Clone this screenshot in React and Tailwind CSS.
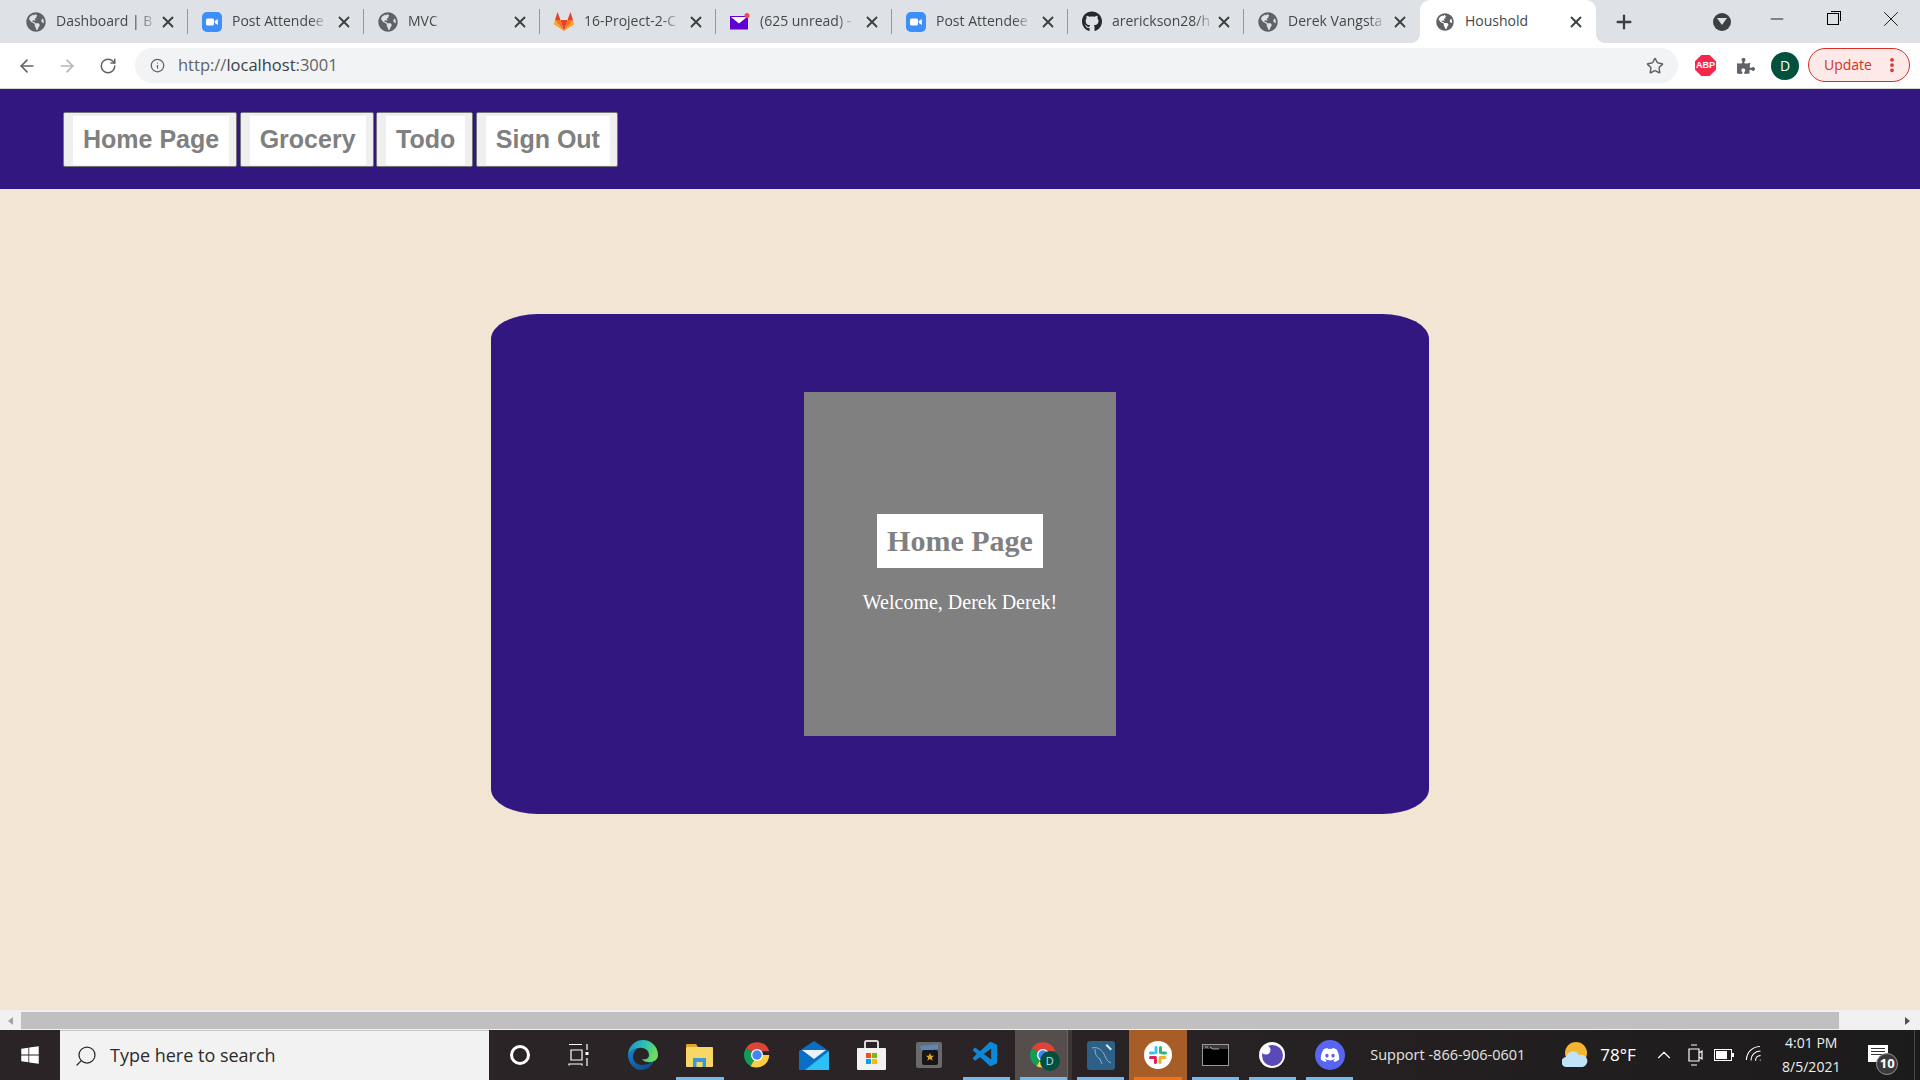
import React from "react";
import { ArrowLeft, ArrowRight, RotateCw, Info, Star, Plus, X, Minus, Search, ChevronUp, Wifi, MoreVertical } from "lucide-react";
import { FaGlobeAmericas, FaGithub, FaWindows, FaDiscord, FaPuzzlePiece } from "react-icons/fa";
import { VscVscode } from "react-icons/vsc";

const ZoomIcon = () => (
  <svg width="20" height="20" viewBox="0 0 20 20">
    <rect width="20" height="20" rx="5" fill="#3d8ef8" />
    <rect x="4" y="6.5" width="8" height="7" rx="1.5" fill="#fff" />
    <path d="M12.8 9l3-2v6l-3-2z" fill="#fff" />
  </svg>
);

const GitlabIcon = () => (
  <svg width="20" height="19" viewBox="0 0 20 19">
    <path d="M3.5 0L6.5 8H1z" fill="#e24329" />
    <path d="M16.5 0L13.5 8H19z" fill="#e24329" />
    <path d="M6.5 8h7L10 19z" fill="#e24329" />
    <path d="M1 8h5.5L10 19z" fill="#fc6d26" />
    <path d="M19 8h-5.5L10 19z" fill="#fc6d26" />
    <path d="M1 8L0 11.5q0 1 1 1.5l9 6z" fill="#fca326" />
    <path d="M19 8l1 3.5q0 1-1 1.5l-9 6z" fill="#fca326" />
  </svg>
);

const MailIcon = () => (
  <svg width="20" height="20" viewBox="0 0 20 20">
    <rect x="0" y="4" width="18" height="13.5" fill="#6001d2" />
    <path d="M1 5h16l-8 6.5z" fill="#fff" />
    <circle cx="17" cy="3.5" r="2.5" fill="#f44" />
  </svg>
);

const ChromeIcon = ({ size = 28 }) => (
  <svg width={size} height={size} viewBox="0 0 26 26">
    <path d="M13 13L2.6 7A12 12 0 0 1 24.4 9.5H13z" fill="#db4437" />
    <path d="M13 13l-6 10.4A12 12 0 0 1 2.6 7z" fill="#0f9d58" />
    <path d="M13 13h11.4A12 12 0 0 1 7 23.4z" fill="#ffcd40" />
    <circle cx="13" cy="13" r="5.6" fill="#fff" />
    <circle cx="13" cy="13" r="4.4" fill="#4285f4" />
  </svg>
);

const EdgeIcon = () => (
  <svg width="30" height="30" viewBox="0 0 30 30">
    <defs>
      <linearGradient id="edgeTop" x1="0" y1="0" x2="1" y2="0.3">
        <stop offset="0" stopColor="#1b8ed6" />
        <stop offset="0.6" stopColor="#2cc4b0" />
        <stop offset="1" stopColor="#6ddc5c" />
      </linearGradient>
      <linearGradient id="edgeLow" x1="0" y1="0" x2="0.6" y2="1">
        <stop offset="0" stopColor="#1d82cc" />
        <stop offset="1" stopColor="#0c4f96" />
      </linearGradient>
    </defs>
    <path d="M15 0a15 15 0 0 1 15 15c0 5-5 8-10 7-3 0-5-1-6-3 3 1 7 0 7-4 0-5-5-8-10-7C5 9 1 12 0 15A15 15 0 0 1 15 0z" fill="url(#edgeTop)" />
    <path d="M0 15c1-3 5-6 9-6-3 2-4 5-4 8 0 5 5 8 9 8 5 0 9-2 12-4-2 5-7 9-13 9C6 30 0 23 0 15z" fill="url(#edgeLow)" />
  </svg>
);

const FolderIcon = () => (
  <svg width="27" height="23" viewBox="0 0 27 23">
    <path d="M0 1q0-1 1-1h9l2 3H0z" fill="#e0a526" />
    <rect y="3" width="27" height="20" rx="1" fill="#f7d766" />
    <path d="M7 23v-9h13v9h-3.5v-5h-6v5z" fill="#3a9ad9" />
  </svg>
);

const MailAppIcon = () => (
  <svg width="30" height="29" viewBox="0 0 30 29">
    <path d="M15 0l15 10v19H0V10z" fill="#0a6fc4" />
    <path d="M3 9h24L15 18z" fill="#e8f2f8" />
    <path d="M30 10v19H6z" fill="#2cc0f5" />
  </svg>
);

const StoreIcon = () => (
  <svg width="29" height="30" viewBox="0 0 29 30">
    <path d="M8 8V2.5q0-1.5 1.5-1.5h10q1.5 0 1.5 1.5V8" fill="none" stroke="#d8d8d8" strokeWidth="2" />
    <rect y="8" width="29" height="22" rx="1" fill="#f2f2f2" />
    <rect x="9" y="13" width="5" height="5" fill="#f25022" />
    <rect x="15" y="13" width="5" height="5" fill="#7fba00" />
    <rect x="9" y="19" width="5" height="5" fill="#00a4ef" />
    <rect x="15" y="19" width="5" height="5" fill="#ffb900" />
  </svg>
);

const GameIcon = () => (
  <svg width="26" height="26" viewBox="0 0 26 26">
    <rect width="26" height="26" rx="2" fill="#6a6a6a" />
    <path d="M4 4l18-2v5L6 9z" fill="#5a86b8" />
    <rect x="6" y="8" width="16" height="15" rx="2" fill="#161616" />
    <path d="M14 11l1.2 2.8h2.8l-2.2 1.9.9 3-2.7-1.8-2.7 1.8.9-3-2.2-1.9h2.8z" fill="#e0a526" />
  </svg>
);

const MysqlIcon = () => (
  <svg width="28" height="29" viewBox="0 0 28 29">
    <rect width="28" height="29" rx="3" fill="#2c6087" />
    <path d="M5 7c6-2 11 3 13 8 1 3 3 6 6 7M8 8c0 6 2 8 5 10l2 5" fill="none" stroke="#a9c3d6" strokeWidth="0.8" />
    <path d="M20 3l5 5-1.5 1.5-5-5z" fill="#d8e4ec" />
  </svg>
);

const SlackIcon = () => (
  <svg width="28" height="28" viewBox="0 0 28 28">
    <circle cx="14" cy="14" r="14" fill="#fff" />
    <rect x="10.5" y="5" width="3" height="8" rx="1.5" fill="#36c5f0" />
    <rect x="5" y="10.5" width="6" height="3" rx="1.5" fill="#36c5f0" />
    <rect x="15" y="5" width="3" height="8" rx="1.5" fill="#2eb67d" />
    <rect x="17" y="10.5" width="6" height="3" rx="1.5" fill="#2eb67d" />
    <rect x="14.5" y="15" width="8" height="3" rx="1.5" fill="#ecb22e" />
    <rect x="14.5" y="17" width="3" height="6" rx="1.5" fill="#ecb22e" />
    <rect x="5" y="15" width="8" height="3" rx="1.5" fill="#e01e5a" />
    <rect x="10" y="17" width="3" height="6" rx="1.5" fill="#e01e5a" />
  </svg>
);

const TerminalIcon = () => (
  <svg width="27" height="22" viewBox="0 0 27 22">
    <rect width="27" height="22" fill="#9a9a9a" />
    <rect x="1" y="1" width="25" height="4" fill="#3a3a3a" />
    <rect x="1" y="5" width="25" height="16" fill="#000" />
    <path d="M3 3h3M8 3l3 2h6" stroke="#ccc" strokeWidth="0.8" fill="none" />
  </svg>
);

const EclipseIcon = () => (
  <svg width="26" height="26" viewBox="0 0 26 26">
    <circle cx="13" cy="13" r="13" fill="#fff" />
    <circle cx="13.5" cy="13.5" r="10.5" fill="#5b49b8" />
    <circle cx="7" cy="8" r="4.5" fill="#fff" />
  </svg>
);

const WeatherIcon = () => (
  <svg width="26" height="26" viewBox="0 0 26 26">
    <circle cx="14" cy="11" r="11" fill="#f5b52e" />
    <path d="M5 25a5 5 0 0 1-1-10 7 7 0 0 1 13-2 6 6 0 0 1 4 12z" fill="#bfe3f7" />
  </svg>
);

const globe = <FaGlobeAmericas size={20} className="text-[#5f6368]" />;

const tabs = [
  { title: "Dashboard | B", icon: globe },
  { title: "Post Attendee", icon: <ZoomIcon /> },
  { title: "MVC", icon: globe },
  { title: "16-Project-2-C", icon: <GitlabIcon /> },
  { title: "(625 unread) -", icon: <MailIcon /> },
  { title: "Post Attendee", icon: <ZoomIcon /> },
  { title: "arerickson28/h", icon: <FaGithub size={21} className="text-[#24292e]" /> },
  { title: "Derek Vangsta", icon: globe },
];

function Tab({ title, icon, last }) {
  return (
    <div className="w-[176px] h-[43px] flex items-center pl-[14px] pr-[11px] shrink-0 relative">
      <span className="w-5 flex justify-center shrink-0">{icon}</span>
      <span className="ml-[10px] -mt-[2px] whitespace-nowrap text-[14px] text-[#45474a] [mask-image:linear-gradient(to_right,black_85%,rgba(0,0,0,0.25))]">{title}</span>
      <X size={18} strokeWidth={2.5} className="ml-auto text-[#3c4043]" />
      {!last && <span className="absolute right-0 top-[9px] h-[25px] w-px bg-[#94979b]" />}
    </div>
  );
}

function NavButton({ label }) {
  return (
    <button className="h-[55px] bg-[#efefef] border border-[#767676] rounded-[2px] pl-[9px] pr-[7px] flex items-start pt-[3px]">
      <span className="h-[49px] bg-white px-[10px] flex items-center text-[25px] font-bold text-[#808080] font-['Liberation_Sans',Arial,sans-serif]">{label}</span>
    </button>
  );
}

function TaskItem({ children, active, lit, accent, hot }) {
  return (
    <div className={`w-[57.25px] h-[50px] flex items-center justify-center shrink-0 relative ${hot ? "bg-[#a65d27]" : active ? "bg-[#564e4d]" : ""}`}>
      {children}
      {active && <span className="absolute top-0 bottom-0 right-0 w-[5px] bg-[#3d3636] border-l border-[#6a6362]" />}
      {lit && <span className={`absolute bottom-0 left-[5px] right-[5px] h-[3px] ${accent ? "bg-[#f7720f]" : "bg-[#76b9ed]"}`} />}
    </div>
  );
}

export default function App() {
  return (
    <div className="w-[1920px] h-[1080px] flex flex-col overflow-hidden bg-[#f3e5d3] font-['Open_Sans','Liberation_Sans',sans-serif]">
      {/* browser tabs */}
      <div className="h-[43px] bg-[#dee1e6] flex items-center pl-[12px] shrink-0">
        {tabs.map((t, i) => (
          <Tab key={i} {...t} last={i === tabs.length - 1} />
        ))}
        <div className="w-[176px] h-[43px] bg-white rounded-t-[10px] flex items-center pl-[16px] pr-[11px] shrink-0 relative">
          <span className="absolute -left-[10px] bottom-0 w-[10px] h-[10px] bg-[radial-gradient(circle_at_0_0,#dee1e6_10px,#ffffff_10.5px)]" />
          <span className="absolute -right-[10px] bottom-0 w-[10px] h-[10px] bg-[radial-gradient(circle_at_100%_0,#dee1e6_10px,#ffffff_10.5px)]" />
          <FaGlobeAmericas size={18} className="text-[#5f6368]" />
          <span className="ml-[11px] -mt-[2px] text-[14px] text-[#45474a]">Houshold</span>
          <X size={18} strokeWidth={2.5} className="ml-auto text-[#3c4043]" />
        </div>
        <Plus size={22} strokeWidth={2.5} className="ml-[17px] text-[#3c4043]" />
        <div className="ml-[78px] w-[18px] h-[18px] rounded-full bg-[#3c4043] flex items-center justify-center">
          <span className="w-0 h-0 border-x-[5px] border-x-transparent border-t-[7px] border-t-[#dee1e6]" />
        </div>
        <Minus size={20} strokeWidth={1} className="ml-[36px] -mt-[6px] text-black" />
        <div className="ml-[40px] -mt-[6px] w-[12px] h-[12px] border border-black relative">
          <span className="absolute -top-[3px] -right-[3px] w-[10px] h-[10px] border-t border-r border-black" />
        </div>
        <X size={26} strokeWidth={0.8} className="ml-[39px] -mt-[6px] text-black" />
      </div>

      {/* address bar */}
      <div className="h-[46px] bg-white border-b border-[#d5d6d8] flex items-center shrink-0">
        <div className="w-[135px] flex items-center shrink-0 pl-[17px]">
          <ArrowLeft size={20} className="text-[#5f6368]" />
          <ArrowRight size={20} className="ml-[20px] text-[#b4b7ba]" />
          <RotateCw size={18} className="ml-[22px] text-[#5f6368]" />
        </div>
        <div className="w-[1543px] h-[35px] bg-[#f1f3f4] rounded-full flex items-center pl-[15px] shrink-0">
          <Info size={15} className="text-[#5f6368]" />
          <span className="ml-[13px] -mt-[1px] text-[16.5px] text-[#5f6368]">http://<span className="text-[#3c4043]">localhost</span>:3001</span>
          <Star size={18} className="ml-auto mr-[14px] text-[#5f6368]" />
        </div>
        <span className="ml-[17px] w-[21px] h-[21px] bg-[#f2294d] [clip-path:polygon(30%_0,70%_0,100%_30%,100%_70%,70%_100%,30%_100%,0_70%,0_30%)] flex items-center justify-center text-white text-[9px] font-bold font-['Liberation_Sans',sans-serif]">ABP</span>
        <FaPuzzlePiece size={18} className="ml-[21px] text-[#5f6368]" />
        <span className="ml-[16px] w-[28px] h-[28px] rounded-full bg-[#01513e] flex items-center justify-center text-white text-[14px]">D</span>
        <div className="ml-[9px] -mt-[1px] w-[102px] h-[34px] rounded-full bg-[#fde9e7] border border-[#d93025] flex items-center pl-[15px] text-[14px] text-[#d93025]">
          <span className="-mt-[1px]">Update</span>
          <MoreVertical size={18} strokeWidth={3} className="ml-auto mr-[8px]" />
        </div>
      </div>

      {/* app nav */}
      <nav className="h-[100px] bg-[#321780] flex items-center pl-[63px] gap-[2.5px] shrink-0">
        <NavButton label="Home Page" />
        <NavButton label="Grocery" />
        <NavButton label="Todo" />
        <NavButton label="Sign Out" />
      </nav>

      {/* page */}
      <main className="flex-1 flex justify-center items-start pt-[125px]">
        <section className="w-[938px] h-[500px] bg-[#321780] rounded-[5%] flex items-center justify-center">
          <div className="w-[312px] h-[344px] bg-[#808080] flex flex-col items-center pt-[122px] font-['Liberation_Serif','Times_New_Roman',serif]">
            <h1 className="h-[54px] w-[166px] bg-white flex items-center justify-center pb-[2px] text-[30px] font-bold text-[#808080]">Home Page</h1>
            <p className="mt-[19px] text-[20px] text-white">Welcome, Derek Derek!</p>
          </div>
        </section>
      </main>

      {/* horizontal scrollbar */}
      <div className="h-[20px] bg-[#f1f1f1] flex items-start pt-[2px] shrink-0">
        <div className="w-[21px] h-[17px] flex items-center justify-center">
          <span className="w-0 h-0 border-y-[4px] border-y-transparent border-r-[5px] border-r-[#a3a3a3]" />
        </div>
        <div className="w-[1818px] h-[17px] bg-[#c0c0c0]" />
        <div className="flex-1 h-[17px] flex items-center justify-end pr-[10px]">
          <span className="w-0 h-0 border-y-[4px] border-y-transparent border-l-[5px] border-l-[#505050]" />
        </div>
      </div>

      {/* windows taskbar */}
      <div className="h-[50px] bg-[linear-gradient(to_right,#2b2426,#2b2426_50%,#1c1b1c)] flex items-center shrink-0 text-white">
        <div className="w-[60px] flex justify-center shrink-0">
          <FaWindows size={20} />
        </div>
        <div className="w-[429px] h-[50px] bg-[#f2f2f2] border-t border-[#c8c8c8] flex items-center pl-[14px] shrink-0 text-[#2b2b2b]">
          <Search size={24} strokeWidth={1.25} className="-scale-x-100" />
          <span className="ml-[12px] text-[18px]">Type here to search</span>
        </div>
        <div className="w-[61px] flex justify-center shrink-0">
          <span className="w-[20px] h-[20px] rounded-full border-[3px] border-white" />
        </div>
        <div className="w-[64px] pr-[6px] flex justify-center shrink-0">
          <svg width="22" height="24" viewBox="0 0 22 24" fill="none" stroke="#fff" strokeWidth="1.2">
            <path d="M1 1.5h13M3 7h11v10H3zM1 22.5V21h13v1.5M19 1v6M19 15v8" />
            <rect x="17.5" y="9" width="3" height="3" fill="#fff" stroke="none" />
          </svg>
        </div>
        <TaskItem><EdgeIcon /></TaskItem>
        <TaskItem lit><FolderIcon /></TaskItem>
        <TaskItem><ChromeIcon /></TaskItem>
        <TaskItem><MailAppIcon /></TaskItem>
        <TaskItem><StoreIcon /></TaskItem>
        <TaskItem><GameIcon /></TaskItem>
        <TaskItem lit><VscVscode size={30} className="text-[#0d87d6]" /></TaskItem>
        <TaskItem lit active>
          <ChromeIcon />
          <span className="absolute left-[25px] top-[21px] w-[20px] h-[20px] rounded-full bg-[#01513e] flex items-center justify-center text-[11px] text-[#cde]">D</span>
        </TaskItem>
        <TaskItem lit><MysqlIcon /></TaskItem>
        <TaskItem lit accent hot><SlackIcon /></TaskItem>
        <TaskItem lit><TerminalIcon /></TaskItem>
        <TaskItem lit><EclipseIcon /></TaskItem>
        <TaskItem lit>
          <span className="w-[30px] h-[30px] rounded-full bg-[#5865f2] flex items-center justify-center">
            <FaDiscord size={20} />
          </span>
        </TaskItem>
        <span className="ml-[12px] w-[190px] shrink-0 text-[14.5px] text-[#e6e6e6] whitespace-nowrap">Support -866-906-0601</span>
        <span className="w-[30px] flex justify-center shrink-0"><WeatherIcon /></span>
        <span className="ml-[10px] w-[45px] shrink-0 text-[17px]">78°F</span>
        <span className="w-[38px] flex justify-center shrink-0"><ChevronUp size={22} strokeWidth={1.25} /></span>
        <span className="w-[24px] flex justify-center shrink-0">
          <svg width="16" height="24" viewBox="0 0 16 24" fill="none" stroke="#fff" strokeWidth="1.2">
            <path d="M4 2h6M4 22h6M2 6h10v12H2zM12 10l3-2v8l-3-2" />
          </svg>
        </span>
        <span className="w-[34px] flex justify-center shrink-0">
          <svg width="20" height="12" viewBox="0 0 20 12">
            <rect x="0.5" y="0.5" width="17" height="11" fill="none" stroke="#fff" />
            <rect x="2" y="2" width="11" height="8" fill="#fff" />
            <rect x="18" y="4" width="2" height="4" fill="#fff" />
          </svg>
        </span>
        <span className="w-[28px] flex justify-center shrink-0"><Wifi size={22} strokeWidth={1.25} className="-rotate-45" /></span>
        <div className="w-[84px] shrink-0 flex flex-col items-center text-[14px] leading-[24px] text-[#efefef] whitespace-nowrap">
          <span>4:01 PM</span>
          <span>8/5/2021</span>
        </div>
        <div className="ml-[15px] -mt-[4px] relative w-[20px] h-[17px] bg-white shrink-0 flex flex-col gap-[2px] pt-[3px] px-[3px]">
          <span className="h-px bg-[#333]" />
          <span className="h-px bg-[#333]" />
          <span className="h-px bg-[#333]" />
          <span className="absolute left-[8px] top-[8px] w-[22px] h-[22px] rounded-full bg-[#3a3a3a] border border-[#909090] flex items-center justify-center text-[13px] font-bold">10</span>
        </div>
        <span className="ml-auto w-[6px] h-[50px] border-l border-[#4a4a4a]" />
      </div>
    </div>
  );
}
